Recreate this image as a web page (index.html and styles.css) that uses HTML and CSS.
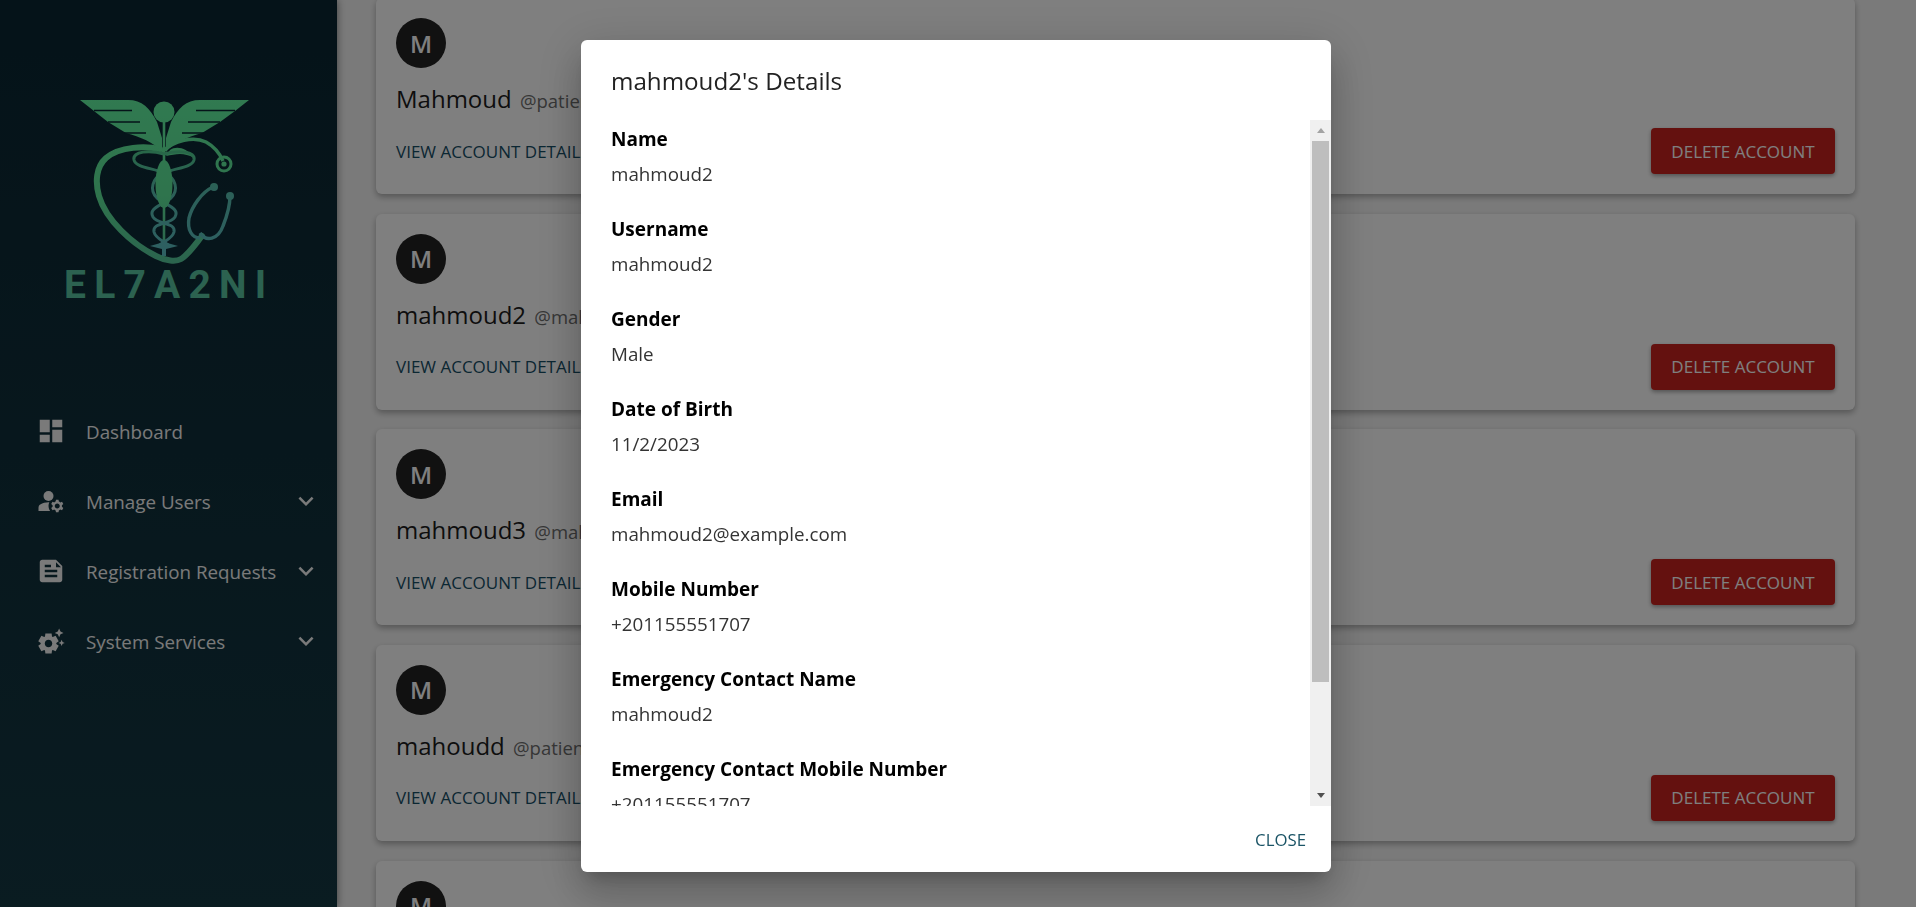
FILE: index.html
```html
<!DOCTYPE html>
<html lang="en">
<head>
    <meta charset="UTF-8">
    <meta name="viewport" content="width=device-width, initial-scale=1.0">
    <title>Manage Users</title>
    <link rel="stylesheet" href="styles.css">
</head>
<body>
    <div class="app">
        <aside class="sidebar">
            <div class="logo">
                <svg class="logo-mark" width="200" height="178" viewBox="0 0 200 178">
                    <defs>
                        <linearGradient id="logoGrad" gradientUnits="userSpaceOnUse" x1="0" y1="0" x2="0" y2="175">
                            <stop offset="0" stop-color="#62f5a2"/>
                            <stop offset="0.6" stop-color="#5ee89a"/>
                            <stop offset="1" stop-color="#56c89c"/>
                        </linearGradient>
                        <linearGradient id="snakeGrad" gradientUnits="userSpaceOnUse" x1="0" y1="60" x2="0" y2="160">
                            <stop offset="0" stop-color="#50d090"/>
                            <stop offset="0.4" stop-color="#58c0b0"/>
                            <stop offset="1" stop-color="#5cc0c4"/>
                        </linearGradient>
                    </defs>
                    <!-- wings -->
                    <path fill="url(#logoGrad)" d="M10 10H58C72 10 80 18 87 32L92 48V62C84 52 70 47 56 43L38 32L24 21Z"/>
                    <path fill="url(#logoGrad)" d="M179 10H130C116 10 108 18 101 32L96 48V62C104 52 118 47 132 43L150 32L165 21Z"/>
                    <path class="wing-slit" d="M24 20.5H62M38 32H70M54 43H76"/>
                    <path class="wing-slit" d="M165 20.5H126M150 32H118M134 43H112"/>
                    <circle cx="94" cy="22" r="10.5" fill="url(#logoGrad)"/>
                    <path d="M94 30V158" stroke="url(#logoGrad)" stroke-width="2.6" fill="none"/>
                    <!-- heart + tube -->
                    <path d="M90 59C76 56 50 56 36 68C26 77 25 92 29 106C36 130 62 154 86 166C96 171 106 172 111 169C118 165 124 156 132 146" stroke="url(#logoGrad)" stroke-width="6" fill="none" stroke-linecap="round"/>
                    <path d="M92 62C104 50 124 46 136 52C145 57 150 64 153 71" stroke="url(#logoGrad)" stroke-width="3.4" fill="none"/>
                    <circle cx="154" cy="74" r="7" stroke="url(#logoGrad)" stroke-width="3" fill="none"/>
                    <circle cx="154" cy="74" r="2.6" fill="url(#logoGrad)"/>
                    <path d="M100 60C106 56 116 57 124 68C114 62 106 64 96 66Z" fill="url(#logoGrad)"/>
                    <!-- snakes -->
                    <path class="snake" d="M94 64C80 60 62 61 64 70C66 78 84 78 94 83C106 88 109 100 101 108C91 116 78 118 83 127C88 135 106 132 104 142C102 150 92 151 88 157"/>
                    <path class="snake" d="M94 64C108 60 126 61 124 70C122 78 104 78 94 83C82 88 79 100 87 108C97 116 110 118 105 127C100 135 82 132 84 142C86 150 96 151 100 157"/>
                    <ellipse cx="94" cy="94" rx="8.5" ry="24" fill="url(#logoGrad)"/>
                    <path d="M80 156L94 152L108 156L96 159V166H92V159Z" fill="url(#snakeGrad)"/>
                    <!-- stethoscope -->
                    <path class="tube" d="M130 148C122 148 117 140 119 128C122 116 132 102 143 97"/>
                    <path class="tube" d="M130 143C136 152 148 150 153 136C157 126 160 116 160 106"/>
                    <circle cx="144" cy="97" r="4" fill="url(#snakeGrad)"/>
                    <circle cx="160" cy="106" r="4" fill="url(#snakeGrad)"/>
                </svg>
                <div class="logo-text">EL7A2NI</div>
            </div>

            <nav class="nav">
                <div class="nav-item">
                    <svg class="nav-icon" viewBox="0 0 24 24"><path d="M3 13h8V3H3v10zm0 8h8v-6H3v6zm10 0h8V11h-8v10zm0-18v6h8V3h-8z"/></svg>
                    <span class="nav-label">Dashboard</span>
                </div>
                <div class="nav-item">
                    <svg class="nav-icon" viewBox="0 0 24 24"><path d="M10.67 13.02c-.22-.01-.44-.02-.67-.02-2.42 0-4.68.67-6.61 1.82-.88.52-1.39 1.5-1.39 2.53V20h9.26c-.79-1.13-1.26-2.51-1.26-4 0-1.07.25-2.07.67-2.98z"/><circle cx="10" cy="8" r="4"/><path d="M20.75 16c0-.22-.03-.42-.06-.63l1.14-1.01-1-1.73-1.45.49c-.32-.27-.68-.48-1.08-.63L18 11h-2l-.3 1.49c-.4.15-.76.36-1.08.63l-1.45-.49-1 1.73 1.14 1.01c-.03.21-.06.41-.06.63s.03.42.06.63l-1.14 1.01 1 1.73 1.45-.49c.32.27.68.48 1.08.63L16 21h2l.3-1.49c.4-.15.76-.36 1.08-.63l1.45.49 1-1.73-1.14-1.01c.03-.21.06-.41.06-.63zM17 18c-1.1 0-2-.9-2-2s.9-2 2-2 2 .9 2 2-.9 2-2 2z"/></svg>
                    <span class="nav-label">Manage Users</span>
                    <svg class="nav-chevron" viewBox="0 0 24 24"><path d="M16.59 8.59 12 13.17 7.41 8.59 6 10l6 6 6-6z"/></svg>
                </div>
                <div class="nav-item">
                    <svg class="nav-icon" viewBox="0 0 24 24"><path d="M16 3H5c-1.1 0-1.99.9-1.99 2L3 19c0 1.1.89 2 1.99 2H19c1.1 0 2-.9 2-2V8l-5-5zM7 7h5v2H7V7zm10 10H7v-2h10v2zm0-4H7v-2h10v2zm-1-4V5l4 4h-4z"/></svg>
                    <span class="nav-label">Registration Requests</span>
                    <svg class="nav-chevron" viewBox="0 0 24 24"><path d="M16.59 8.59 12 13.17 7.41 8.59 6 10l6 6 6-6z"/></svg>
                </div>
                <div class="nav-item">
                    <svg class="nav-icon" viewBox="0 0 24 24"><path d="M17.41 6.59 15 5.5l2.41-1.09L18.5 2l1.09 2.41L22 5.5l-2.41 1.09L18.5 9l-1.09-2.41zm3.87 6.13L20.5 11l-.78 1.72-1.72.78 1.72.78.78 1.72.78-1.72L23 13.5l-1.72-.78zm-5.04 1.65 1.94 1.47-2.5 4.33-2.24-.94c-.2.13-.42.26-.64.37l-.3 2.4h-5l-.3-2.41c-.22-.11-.43-.23-.64-.37l-2.24.94-2.5-4.33 1.94-1.47c-.01-.11-.01-.24-.01-.37s0-.26.01-.38l-1.94-1.47 2.5-4.33 2.24.94c.2-.13.42-.26.64-.37L7.5 6h5l.3 2.41c.22.11.43.23.64.37l2.24-.94 2.5 4.33-1.94 1.47c.01.12.01.24.01.37s0 .25-.01.36zM13 14c0-1.66-1.34-3-3-3s-3 1.34-3 3 1.34 3 3 3 3-1.34 3-3z"/></svg>
                    <span class="nav-label">System Services</span>
                    <svg class="nav-chevron" viewBox="0 0 24 24"><path d="M16.59 8.59 12 13.17 7.41 8.59 6 10l6 6 6-6z"/></svg>
                </div>
            </nav>
        </aside>

        <main class="content">
            <div class="card">
                <div class="avatar">M</div>
                <div class="card-name">Mahmoud <span class="card-handle">@patient</span></div>
                <div class="card-actions">
                    <button class="btn-link">VIEW ACCOUNT DETAILS</button>
                    <button class="btn-delete">DELETE ACCOUNT</button>
                </div>
            </div>
            <div class="card">
                <div class="avatar">M</div>
                <div class="card-name">mahmoud2 <span class="card-handle">@mahmoud2</span></div>
                <div class="card-actions">
                    <button class="btn-link">VIEW ACCOUNT DETAILS</button>
                    <button class="btn-delete">DELETE ACCOUNT</button>
                </div>
            </div>
            <div class="card">
                <div class="avatar">M</div>
                <div class="card-name">mahmoud3 <span class="card-handle">@mahmoud3</span></div>
                <div class="card-actions">
                    <button class="btn-link">VIEW ACCOUNT DETAILS</button>
                    <button class="btn-delete">DELETE ACCOUNT</button>
                </div>
            </div>
            <div class="card">
                <div class="avatar">M</div>
                <div class="card-name">mahoudd <span class="card-handle">@patient</span></div>
                <div class="card-actions">
                    <button class="btn-link">VIEW ACCOUNT DETAILS</button>
                    <button class="btn-delete">DELETE ACCOUNT</button>
                </div>
            </div>
            <div class="card">
                <div class="avatar">M</div>
            </div>
        </main>
    </div>

    <div class="overlay">
        <div class="dialog">
            <h2 class="dialog-title">mahmoud2's Details</h2>
            <div class="dialog-body">
                <div class="fields">
                    <div class="field"><div class="field-label">Name</div><div class="field-value">mahmoud2</div></div>
                    <div class="field"><div class="field-label">Username</div><div class="field-value">mahmoud2</div></div>
                    <div class="field"><div class="field-label">Gender</div><div class="field-value">Male</div></div>
                    <div class="field"><div class="field-label">Date of Birth</div><div class="field-value">11/2/2023</div></div>
                    <div class="field"><div class="field-label">Email</div><div class="field-value">mahmoud2@example.com</div></div>
                    <div class="field"><div class="field-label">Mobile Number</div><div class="field-value">+201155551707</div></div>
                    <div class="field"><div class="field-label">Emergency Contact Name</div><div class="field-value">mahmoud2</div></div>
                    <div class="field"><div class="field-label">Emergency Contact Mobile Number</div><div class="field-value">+201155551707</div></div>
                </div>
                <div class="scrollbar">
                    <span class="arrow-up"></span>
                    <div class="scroll-track"><div class="scroll-thumb"></div></div>
                    <span class="arrow-down"></span>
                </div>
            </div>
            <div class="dialog-actions">
                <button class="btn-close">CLOSE</button>
            </div>
        </div>
    </div>
</body>
</html>
```

FILE: styles.css
```css
* {
    box-sizing: border-box;
}

body {
    font-family: "Open Sans", "Liberation Sans", sans-serif;
    background-color: #f5f5f5;
    margin: 0;
    overflow: hidden;
}

button {
    font-family: inherit;
    border: none;
    background: none;
    cursor: pointer;
    padding: 0;
}

.app {
    display: flex;
    height: 100vh;
    overflow: hidden;
}

/* sidebar */
.sidebar {
    width: 337px;
    flex-shrink: 0;
    background: linear-gradient(180deg, #0a2632 0%, #143843 100%);
    box-shadow: 0 0 8px rgba(0, 0, 0, 0.5);
    padding-top: 90px;
    position: relative;
}

.logo {
    height: 306px;
}

.logo-mark {
    display: block;
    margin-left: 70px;
}

.wing-slit {
    stroke: #0a2632;
    stroke-width: 1.6;
    fill: none;
}

.snake {
    stroke: url(#snakeGrad);
    stroke-width: 3;
    fill: none;
}

.tube {
    stroke: url(#snakeGrad);
    stroke-width: 3.4;
    fill: none;
}

.logo-text {
    font-family: Roboto, "Liberation Sans", sans-serif;
    font-weight: 700;
    font-size: 39px;
    line-height: 34px;
    letter-spacing: 8.2px;
    margin-left: 64px;
    color: #58c4a0;
}

.nav-item {
    display: flex;
    align-items: center;
    height: 70px;
    padding: 0 16px 0 36px;
    color: #f5f5f5;
}

.nav-icon {
    width: 30px;
    height: 30px;
    fill: currentColor;
    flex-shrink: 0;
}

.nav-label {
    font-size: 18.8px;
    line-height: 26px;
    margin: 1px 0 0 20px;
    flex: 1;
    white-space: nowrap;
}

.nav-chevron {
    width: 30px;
    height: 30px;
    fill: currentColor;
}

/* list of accounts */
.content {
    flex: 1;
    padding: 0 61px 0 39px;
    margin-top: -2px;
}

.card {
    background-color: #fff;
    height: 196px;
    padding: 20px;
    margin-bottom: 19.67px;
    border-radius: 6px;
    box-shadow: 0 3px 6px rgba(0, 0, 0, 0.3);
}

.avatar {
    width: 50px;
    height: 50px;
    border-radius: 50%;
    background-color: #222;
    color: #fff;
    font-size: 24px;
    font-weight: 600;
    display: flex;
    align-items: center;
    justify-content: center;
}

.card-name {
    font-size: 24px;
    line-height: 32px;
    height: 32px;
    margin-top: 15px;
    color: #1c1c1c;
    white-space: nowrap;
}

.card-handle {
    font-size: 18.5px;
    color: #6e6e6e;
    margin-left: 2px;
}

.card-actions {
    display: flex;
    justify-content: space-between;
    align-items: center;
    margin-top: 13px;
}

.btn-link {
    font-size: 17px;
    font-weight: 500;
    color: #164e66;
}

.btn-delete {
    width: 184px;
    height: 46px;
    font-size: 17px;
    font-weight: 500;
    color: #fff;
    background-color: #c9231e;
    border-radius: 4px;
    box-shadow: 0 2px 4px rgba(0, 0, 0, 0.35);
}

/* details dialog */
.overlay {
    position: fixed;
    inset: 0;
    background-color: rgba(0, 0, 0, 0.5);
    padding: 40px 0 0 581px;
}

.dialog {
    width: 750px;
    height: 832px;
    background-color: #fff;
    border-radius: 6px;
    box-shadow: 0 11px 15px -7px rgba(0, 0, 0, 0.2), 0 24px 38px 3px rgba(0, 0, 0, 0.14), 0 9px 46px 8px rgba(0, 0, 0, 0.12);
    display: flex;
    flex-direction: column;
    overflow: hidden;
}

.dialog-title {
    font-size: 24.2px;
    font-weight: 400;
    line-height: 32px;
    height: 80px;
    margin: 0;
    padding: 25px 30px 0;
    color: #222;
}

.dialog-body {
    height: 686px;
    display: flex;
}

.fields {
    flex: 1;
    overflow: hidden;
    padding: 0 30px;
}

.field {
    height: 90px;
    padding-top: 3px;
}

.field-label {
    font-size: 19px;
    font-weight: 700;
    line-height: 32px;
    color: #000;
    white-space: nowrap;
}

.field-value {
    font-size: 18.8px;
    line-height: 24px;
    margin-top: 7px;
    color: #333;
}

.scrollbar {
    width: 21px;
    flex-shrink: 0;
    background-color: #f0f0f0;
    display: flex;
    flex-direction: column;
    align-items: center;
}

.scroll-track {
    flex: 1;
    width: 100%;
    padding: 0 2px;
}

.scroll-thumb {
    height: 541px;
    background-color: #bebebe;
}

.arrow-up {
    width: 0;
    height: 0;
    margin: 8px 0 8px;
    border-left: 4px solid transparent;
    border-right: 4px solid transparent;
    border-bottom: 5px solid #a3a3a3;
}

.arrow-down {
    width: 0;
    height: 0;
    margin: 8px 0 8px;
    border-left: 4px solid transparent;
    border-right: 4px solid transparent;
    border-top: 5px solid #505050;
}

.dialog-actions {
    flex: 1;
    display: flex;
    justify-content: flex-end;
    align-items: center;
    padding: 0 25px 0 0;
}

.btn-close {
    font-size: 16.8px;
    font-weight: 500;
    color: #1b5466;
}
```
